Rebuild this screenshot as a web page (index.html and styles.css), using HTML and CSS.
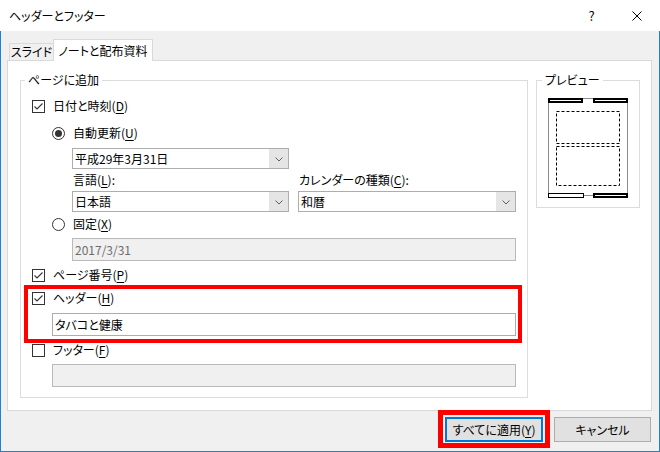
FILE: index.html
```html
<!DOCTYPE html>
<html lang="ja">
<head>
<meta charset="utf-8">
<title>ヘッダーとフッター</title>
<link rel="stylesheet" href="styles.css">
</head>
<body>
<div class="window">
  <div class="titlebar">
    <span class="title">ヘッダーとフッター</span>
    <span class="tb-btn">?</span>
    <span class="tb-btn"><svg width="10" height="10" viewBox="0 0 10 10"><path d="M0.5 0.5 L9.5 9.5 M9.5 0.5 L0.5 9.5" stroke="#000" stroke-width="1" fill="none"/></svg></span>
  </div>
  <div class="body">
    <div class="tabs">
      <div class="tab">スライド</div>
      <div class="tab active">ノートと配布資料</div>
    </div>
    <div class="panel">
      <div class="group main">
        <div class="group-label">ページに追加</div>
        <div class="check row-date">
          <svg class="box" width="13" height="13" viewBox="0 0 13 13"><rect x="0.5" y="0.5" width="12" height="12" fill="#fff" stroke="#333"/><path d="M2.5 6.5 L5 9 L10.5 3.5" stroke="#333" stroke-width="1.1" fill="none"/></svg>
          <span>日付と時刻(<u>D</u>)</span>
        </div>
        <div class="radio row-auto">
          <svg class="box" width="13" height="13" viewBox="0 0 13 13"><circle cx="6.5" cy="6.5" r="6" fill="#fff" stroke="#333"/><circle cx="6.5" cy="6.5" r="3.5" fill="#333"/></svg>
          <span>自動更新(<u>U</u>)</span>
        </div>
        <div class="combo combo-date">
          <span class="combo-text">平成29年3月31日</span>
          <span class="combo-btn"><svg width="8" height="5" viewBox="0 0 8 5"><path d="M0.5 0.5 L4 4 L7.5 0.5" stroke="#606060" fill="none"/></svg></span>
        </div>
        <div class="lang-grid">
          <span class="lbl">言語(<u>L</u>):</span>
          <span class="lbl">カレンダーの種類(<u>C</u>):</span>
          <div class="combo">
            <span class="combo-text">日本語</span>
            <span class="combo-btn"><svg width="8" height="5" viewBox="0 0 8 5"><path d="M0.5 0.5 L4 4 L7.5 0.5" stroke="#606060" fill="none"/></svg></span>
          </div>
          <div class="combo">
            <span class="combo-text">和暦</span>
            <span class="combo-btn"><svg width="8" height="5" viewBox="0 0 8 5"><path d="M0.5 0.5 L4 4 L7.5 0.5" stroke="#606060" fill="none"/></svg></span>
          </div>
        </div>
        <div class="radio row-fixed">
          <svg class="box" width="13" height="13" viewBox="0 0 13 13"><circle cx="6.5" cy="6.5" r="6" fill="#fff" stroke="#333"/></svg>
          <span>固定(<u>X</u>)</span>
        </div>
        <div class="field disabled field-fixed">2017/3/31</div>
        <div class="check row-page">
          <svg class="box" width="13" height="13" viewBox="0 0 13 13"><rect x="0.5" y="0.5" width="12" height="12" fill="#fff" stroke="#333"/><path d="M2.5 6.5 L5 9 L10.5 3.5" stroke="#333" stroke-width="1.1" fill="none"/></svg>
          <span>ページ番号(<u>P</u>)</span>
        </div>
        <div class="check row-header">
          <svg class="box" width="13" height="13" viewBox="0 0 13 13"><rect x="0.5" y="0.5" width="12" height="12" fill="#fff" stroke="#333"/><path d="M2.5 6.5 L5 9 L10.5 3.5" stroke="#333" stroke-width="1.1" fill="none"/></svg>
          <span>ヘッダー(<u>H</u>)</span>
        </div>
        <div class="field field-header">タバコと健康</div>
        <div class="check row-footer">
          <svg class="box" width="13" height="13" viewBox="0 0 13 13"><rect x="0.5" y="0.5" width="12" height="12" fill="#fff" stroke="#333"/></svg>
          <span>フッター(<u>F</u>)</span>
        </div>
        <div class="field disabled field-footer"></div>
        <div class="highlight highlight-header"></div>
      </div>
      <div class="group preview">
        <div class="group-label">プレビュー</div>
        <svg class="preview-pic" width="81" height="100" viewBox="0 0 81 100">
          <rect x="0.5" y="0.5" width="79" height="97" fill="#fff" stroke="#8c8c8c"/>
          <rect x="8.5" y="13.5" width="63" height="32" fill="none" stroke="#000" stroke-dasharray="3 2"/>
          <rect x="8.5" y="48.5" width="63" height="39" fill="none" stroke="#000" stroke-dasharray="3 2"/>
          <rect x="1" y="1" width="33" height="3" fill="#fff" stroke="#000" stroke-width="2"/>
          <rect x="46" y="1" width="33" height="3" fill="#fff" stroke="#000" stroke-width="2"/>
          <rect x="0.5" y="95.5" width="35" height="4" fill="#fff" stroke="#000"/>
          <rect x="46" y="96" width="33" height="3" fill="#fff" stroke="#000" stroke-width="2"/>
        </svg>
      </div>
    </div>
    <div class="buttons">
      <div class="btn btn-default">すべてに適用(<u>Y</u>)<span class="highlight highlight-btn"></span></div>
      <div class="btn">キャンセル</div>
    </div>
  </div>
</div>
</body>
</html>
```
FILE: styles.css
```css
* { box-sizing: border-box; }
html, body { margin: 0; padding: 0; }
body {
  width: 660px;
  height: 452px;
  overflow: hidden;
  font-family: "Noto Sans CJK JP", "Noto Sans", sans-serif;
  font-size: 12px;
  color: #000;
  font-feature-settings: "palt";
}
u { text-decoration: underline; text-underline-offset: 2px; }

.window {
  width: 660px;
  height: 452px;
  display: flex;
  flex-direction: column;
  background: #f0f0f0;
}

.titlebar {
  height: 31px;
  flex: none;
  background: #fff;
  display: flex;
  align-items: center;
  padding-left: 9px;
  padding-right: 1px;
}
.title { flex: 1; line-height: 16px; }
.tb-btn {
  width: 45px;
  height: 31px;
  display: flex;
  align-items: center;
  justify-content: center;
  font-size: 13px;
}

.body {
  flex: 1;
  border: 1px solid #1883d7;
  border-top: none;
  padding: 8px 7px 0 6px;
}

.tabs {
  display: flex;
  align-items: flex-end;
  height: 22px;
  margin: 0 0 -1px 2px;
}
.tab {
  width: 44px;
  height: 17px;
  margin-bottom: 1px;
  border: 1px solid #d9d9d9;
  border-right: none;
  border-bottom: none;
  background: #f0f0f0;
  display: flex;
  align-items: center;
  justify-content: center;
  line-height: 16px;
}
.tab.active {
  width: 100px;
  height: 22px;
  margin-bottom: 0;
  border-right: 1px solid #d9d9d9;
  background: #fff;
  position: relative;
  z-index: 1;
  padding-top: 1px;
}

.panel {
  height: 351px;
  border: 1px solid #d9d9d9;
  background: #fff;
  display: flex;
  align-items: flex-start;
  padding: 19px 0 0 12px;
}

.group {
  border: 1px solid #dcdcdc;
  position: relative;
}
.group.main { width: 508px; height: 318px; }
.group.preview { width: 104px; height: 128px; margin-left: 8px; }
.group-label {
  width: fit-content;
  line-height: 16px;
  height: 16px;
  margin: -9px 0 0 4px;
  padding: 0 3px;
  background: #fff;
}
.preview .group-label { margin-left: 5px; padding: 0 3px; }
.preview-pic { display: block; margin: 10px 0 0 11px; }

.check, .radio {
  display: flex;
  align-items: center;
  height: 16px;
  line-height: 16px;
}
.check { margin-left: 11px; }
.radio { margin-left: 31px; }
.check .box, .radio .box { flex: none; margin-right: 8px; }

.row-date { margin-top: 10px; }
.row-auto { margin-top: 11px; }
.combo-date { margin: 7px 0 0 51px; width: 217px; }
.lang-grid {
  display: grid;
  grid-template-columns: 217px 218px;
  grid-template-rows: 16px 21px;
  column-gap: 9px;
  row-gap: 3px;
  margin: 3px 0 0 51px;
}
.lbl { line-height: 16px; padding-left: 1px; }
.row-fixed { margin-top: 4px; }
.field-fixed { margin: 6px 0 0 51px; width: 444px; }
.row-page { margin-top: 6px; }
.row-header { margin-top: 7px; }
.field-header { margin: 7px 0 0 31px; width: 464px; padding-left: 3px; }
.row-footer { margin-top: 6px; }
.field-footer { margin: 6px 0 0 31px; width: 464px; }

.combo {
  display: flex;
  height: 21px;
  border: 1px solid #adadad;
  background: #fff;
}
.combo-text { flex: 1; padding-left: 2px; line-height: 19px; }
.combo-btn {
  width: 19px;
  background: #e5e5e5;
  display: flex;
  align-items: center;
  justify-content: center;
  padding-top: 1px;
}

.field {
  height: 23px;
  border: 1px solid #adadad;
  background: #fff;
  line-height: 21px;
  padding-left: 2px;
}
.field.disabled { background: #f0f0f0; color: #6d6d6d; border-color: #b9b9b9; }

.highlight {
  position: absolute;
  border: 4px solid #ff0000;
  pointer-events: none;
}
.highlight-header { left: 3px; top: 204px; width: 498px; height: 58px; }

.buttons {
  display: flex;
  justify-content: flex-end;
  gap: 11px;
  margin: 6px 1px 0 0;
}
.btn {
  width: 97px;
  height: 25px;
  border: 1px solid #adadad;
  background: #e1e1e1;
  display: flex;
  align-items: center;
  justify-content: center;
  line-height: 16px;
  position: relative;
}
.btn-default { width: 98px; border: 2px solid #0078d7; }
.highlight-btn { border-width: 5px; left: -9px; top: -9px; width: 112px; height: 38px; }
```
